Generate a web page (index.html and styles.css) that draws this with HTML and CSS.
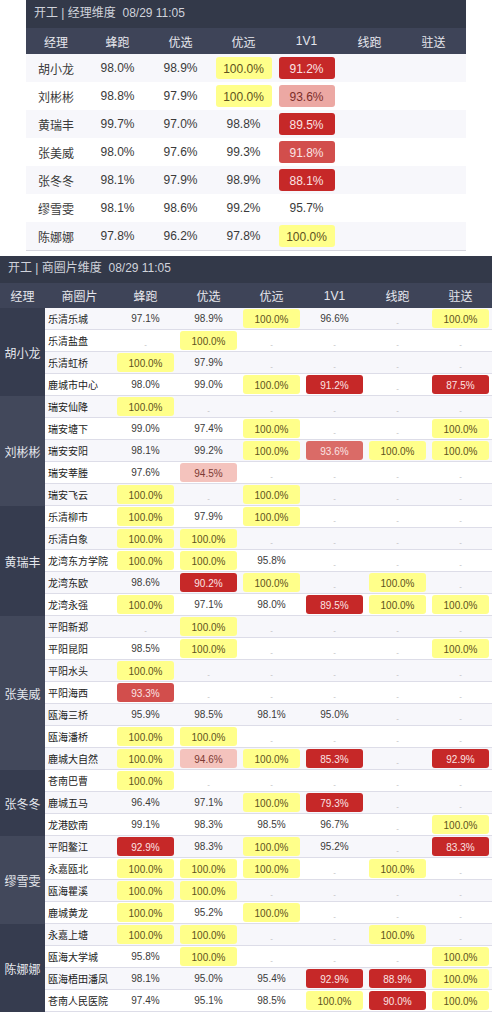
FILE: index.html
```html
<!DOCTYPE html>
<html lang="zh-CN">
<head>
<meta charset="UTF-8">
<meta name="viewport" content="width=device-width, initial-scale=1">
<title>开工看板</title>
<link rel="stylesheet" href="styles.css">
</head>
<body>

<!-- 经理维度 -->
<div class="board board-top">
  <div class="board-title">开工 | 经理维度&nbsp; 08/29 11:05</div>
  <div class="trow thead">
    <div>经理</div><div>蜂跑</div><div>优选</div><div>优远</div><div>1V1</div><div>线跑</div><div>驻送</div>
  </div>
  <div class="trow s">
    <div>胡小龙</div><div>98.0%</div><div>98.9%</div><div><span class="badge y">100.0%</span></div><div><span class="badge r">91.2%</span></div><div></div><div></div>
  </div>
  <div class="trow">
    <div>刘彬彬</div><div>98.8%</div><div>97.9%</div><div><span class="badge y">100.0%</span></div><div><span class="badge r3">93.6%</span></div><div></div><div></div>
  </div>
  <div class="trow s">
    <div>黄瑞丰</div><div>99.7%</div><div>97.0%</div><div>98.8%</div><div><span class="badge r">89.5%</span></div><div></div><div></div>
  </div>
  <div class="trow">
    <div>张美威</div><div>98.0%</div><div>97.6%</div><div>99.3%</div><div><span class="badge r1">91.8%</span></div><div></div><div></div>
  </div>
  <div class="trow s">
    <div>张冬冬</div><div>98.1%</div><div>97.9%</div><div>98.9%</div><div><span class="badge r">88.1%</span></div><div></div><div></div>
  </div>
  <div class="trow">
    <div>缪雪雯</div><div>98.1%</div><div>98.6%</div><div>99.2%</div><div>95.7%</div><div></div><div></div>
  </div>
  <div class="trow s last">
    <div>陈娜娜</div><div>97.8%</div><div>96.2%</div><div>97.8%</div><div><span class="badge y">100.0%</span></div><div></div><div></div>
  </div>
</div>

<!-- 商圈片维度 -->
<div class="board board-area">
  <div class="board-title">开工 | 商圈片维度&nbsp; 08/29 11:05</div>
  <div class="arow thead">
    <div>经理</div><div>商圈片</div><div>蜂跑</div><div>优选</div><div>优远</div><div>1V1</div><div>线跑</div><div>驻送</div>
  </div>
  <div id="areaBody"></div>
</div>

<script>
// y = 100.0% 黄色, 其余 "类:值"
const groups = [
  ["胡小龙", [
    ["乐清乐城","97.1","98.9","y","96.6","-","y"],
    ["乐清盐盘","-","y","-","-","-","-"],
    ["乐清虹桥","y","97.9","-","-","-","-"],
    ["鹿城市中心","98.0","99.0","y","r:91.2","-","r:87.5"]
  ]],
  ["刘彬彬", [
    ["瑞安仙降","y","-","-","-","-","-"],
    ["瑞安塘下","99.0","97.4","y","-","-","y"],
    ["瑞安安阳","98.1","99.2","y","r2:93.6","y","y"],
    ["瑞安莘塍","97.6","p:94.5","-","-","-","-"],
    ["瑞安飞云","y","-","y","-","-","-"]
  ]],
  ["黄瑞丰", [
    ["乐清柳市","y","97.9","y","-","-","-"],
    ["乐清白象","y","y","-","-","-","-"],
    ["龙湾东方学院","y","y","95.8","-","-","-"],
    ["龙湾东欧","98.6","r:90.2","y","-","y","-"],
    ["龙湾永强","y","97.1","98.0","r:89.5","y","y"]
  ]],
  ["张美威", [
    ["平阳新郑","-","y","-","-","-","-"],
    ["平阳昆阳","98.5","y","-","-","-","y"],
    ["平阳水头","y","-","-","-","-","-"],
    ["平阳海西","r1:93.3","-","-","-","-","-"],
    ["瓯海三桥","95.9","98.5","98.1","95.0","-","-"],
    ["瓯海潘桥","y","y","-","-","-","-"],
    ["鹿城大自然","y","p:94.6","y","r:85.3","-","r:92.9"]
  ]],
  ["张冬冬", [
    ["苍南巴曹","y","-","-","-","-","-"],
    ["鹿城五马","96.4","97.1","y","r:79.3","-","-"],
    ["龙港欧南","99.1","98.3","98.5","96.7","-","y"]
  ]],
  ["缪雪雯", [
    ["平阳鳌江","r:92.9","98.3","y","95.2","-","r:83.3"],
    ["永嘉瓯北","y","y","y","-","y","-"],
    ["瓯海瞿溪","y","y","-","-","-","-"],
    ["鹿城黄龙","y","95.2","y","-","-","-"]
  ]],
  ["陈娜娜", [
    ["永嘉上塘","y","y","-","-","y","-"],
    ["瓯海大学城","95.8","y","-","-","-","y"],
    ["瓯海梧田潘凤","98.1","95.0","95.4","r:92.9","r:88.9","y"],
    ["苍南人民医院","97.4","95.1","98.5","y","r:90.0","y"]
  ]]
];

function cell(v){
  if(v==="-") return '<div><span class="dash">-</span></div>';
  if(v==="y") return '<div><span class="badge y">100.0%</span></div>';
  if(v.indexOf(":")>0){const p=v.split(":");return `<div><span class="badge ${p[0]}">${p[1]}%</span></div>`;}
  return `<div>${v}%</div>`;
}

let html="",k=0;
groups.forEach((g,gi)=>{
  html+=`<div class="grp"><div class="mgr${gi%2?" alt":""}">${g[0]}</div><div class="rows">`;
  g[1].forEach(r=>{
    html+=`<div class="arow${k%2?"":" s"}"><div class="area">${r[0]}</div>${r.slice(1).map(cell).join("")}</div>`;
    k++;
  });
  html+="</div></div>";
});
document.getElementById("areaBody").innerHTML=html;
</script>

</body>
</html>
```

FILE: styles.css
```css
:root{
  --title:#333949;--head:#3e4458;--mgr:#363c4f;--mgr-alt:#42485b;
  --stripe:#f7f7fb;--line:#dddde8;--text:#3a3a3a;
}
body{margin:0;font-family:"Liberation Sans","Noto Sans CJK SC",sans-serif;background:#fff;color:var(--text);}

.board-title{background:var(--title);color:#d0d3db;font-size:12px;padding-left:8px;}
.thead{background:var(--head);color:#e6e7ed;font-size:12px;}
.thead>div{display:flex;align-items:center;justify-content:center;}

/* 经理维度 */
.board-top{width:440px;margin-left:26px;}
.board-top .board-title{height:28px;line-height:26px;}
.trow{display:grid;grid-template-columns:60px repeat(5,63px) 65px;height:28px;}
.trow.thead{height:26px;}
.trow>div{display:flex;align-items:center;justify-content:center;font-size:12px;}
.trow.s{background:var(--stripe);}
.trow.last{border-bottom:1px solid #d6d6de;}
.trow .badge{width:56px;height:22px;font-size:12px;}

/* 商圈片维度 */
.board-area{margin-top:5px;}
.board-area .board-title{height:27px;line-height:25px;}
.arow{display:grid;grid-template-columns:69px repeat(6,63px);height:22px;box-sizing:border-box;border-bottom:1px solid var(--line);font-size:10px;}
.arow.thead{grid-template-columns:45px 69px repeat(6,63px);height:25px;border:none;font-size:12px;}
.arow.s{background:var(--stripe);}
.arow>div{display:flex;align-items:center;justify-content:center;}
.arow>.area{justify-content:flex-start;padding-left:3px;font-size:10px;color:#222;}
.arow .badge{width:57px;height:19px;font-size:10px;}

.grp{display:flex;}
.mgr{width:45px;flex:none;background:var(--mgr);color:#e4e6ec;font-size:12px;display:flex;align-items:center;justify-content:center;}
.mgr.alt{background:var(--mgr-alt);}
.rows{flex:1;}

.badge{display:flex;align-items:center;justify-content:center;border-radius:3px;padding-top:2px;box-sizing:border-box;}
.y{background:#ffff8a;color:#5e5220;}
.r{background:#c62828;color:#fbe3e3;}
.r1{background:#d24e4c;color:#fbe3e3;}
.r2{background:#da6b67;color:#fbe3e3;}
.r3{background:#eca8a3;color:#7c2e2a;}
.p{background:#f4c3bd;color:#7c3a34;}
.dash{font-size:8px;color:#bbb;margin-top:7px;}
```
